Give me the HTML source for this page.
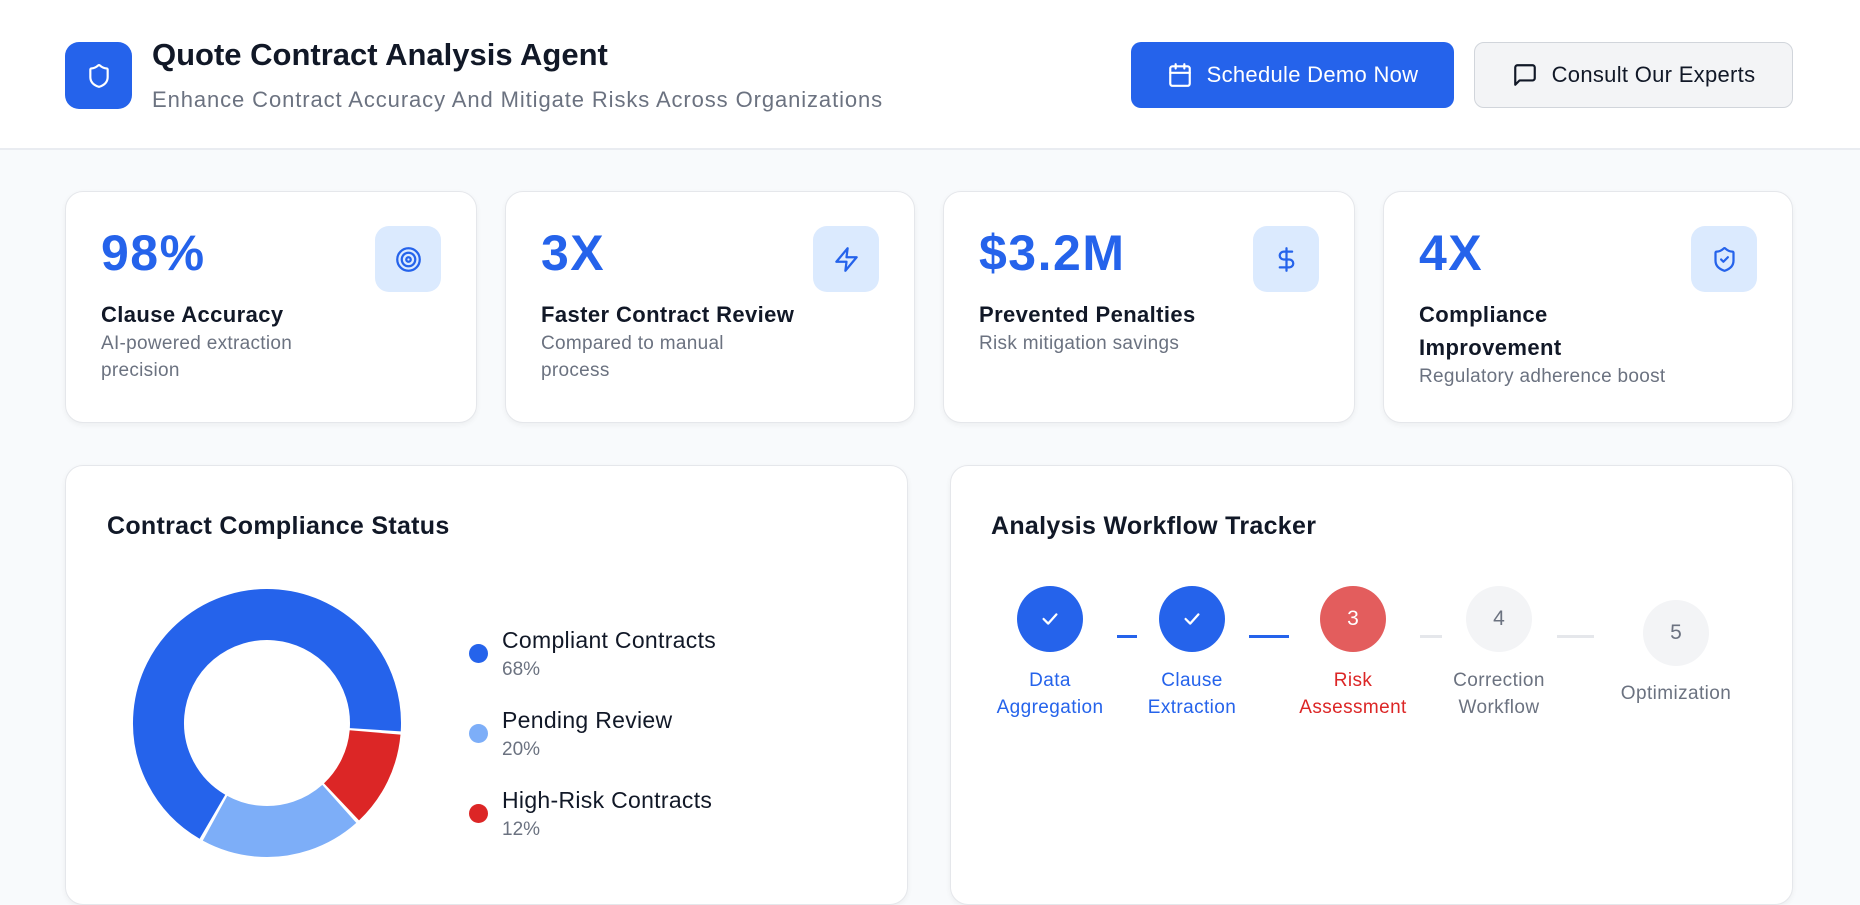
<!DOCTYPE html>
<html><head><meta charset="utf-8"><style>
*{margin:0;padding:0;box-sizing:border-box}
body{width:1860px;height:876px;overflow:hidden;background:#f8fafc;font-family:"Liberation Sans",sans-serif;position:relative;color:#111827}
.abs{position:absolute}
.hdr{left:0;top:0;width:1860px;height:150px;background:#fff;border-bottom:2px solid #e9ecf1}
.logo{left:65px;top:42px;width:67px;height:67px;border-radius:14px;background:#2563eb;display:flex;align-items:center;justify-content:center}
.btn{top:42px;height:66px;border-radius:10px;display:flex;align-items:center;justify-content:center;font-size:22px;gap:14px;letter-spacing:0.3px}
.card{background:#fff;border:1px solid #e5e7eb;border-radius:18px;box-shadow:0 2px 6px rgba(0,0,0,.05)}
.val{font-size:50px;font-weight:bold;color:#2563eb;left:35px;top:32px;letter-spacing:1.5px}
.ib{width:66px;height:66px;border-radius:14px;background:#dbeafe;top:34px;right:35px;display:flex;align-items:center;justify-content:center}
.t{left:35px;top:106px;font-size:22px;line-height:33px;font-weight:bold;color:#111827;letter-spacing:0.4px}
.d{left:35px;font-size:19px;line-height:27px;color:#6b7280;letter-spacing:0.3px}
.lg{font-size:23px;color:#111827;letter-spacing:0.3px}
.lp{font-size:19px;color:#6b7280}
.dot{width:19px;height:19px;border-radius:50%}
.c{width:66px;height:66px;border-radius:50%;display:flex;align-items:center;justify-content:center;font-size:21px}
.lb{font-size:19px;line-height:27px;text-align:center;width:170px;letter-spacing:0.4px}
</style></head><body>
<div class="abs hdr"></div>
<div class="abs logo"><svg width="26" height="26" viewBox="0 0 24 24" fill="none" stroke="#fff" stroke-width="2" stroke-linecap="round" stroke-linejoin="round"><path d="M20 13c0 5-3.5 7.5-7.66 8.95a1 1 0 0 1-.67-.01C7.5 20.5 4 18 4 13V6a1 1 0 0 1 1-1c2 0 4.5-1.2 6.24-2.72a1.17 1.17 0 0 1 1.52 0C14.51 3.81 17 5 19 5a1 1 0 0 1 1 1z"/></svg></div>
<div class="abs" style="left:152px;top:37px;font-size:31px;font-weight:bold;letter-spacing:0px">Quote Contract Analysis Agent</div>
<div class="abs" style="left:152px;top:87px;font-size:22px;color:#6b7280;letter-spacing:0.9px">Enhance Contract Accuracy And Mitigate Risks Across Organizations</div>
<div class="abs btn" style="left:1131px;width:323px;background:#2563eb;color:#fff"><svg width="26" height="26" viewBox="0 0 24 24" fill="none" stroke="#fff" stroke-width="2" stroke-linecap="round" stroke-linejoin="round"><rect x="3" y="4" width="18" height="18" rx="2"/><path d="M16 2v4M8 2v4M3 10h18"/></svg>Schedule Demo Now</div>
<div class="abs btn" style="left:1474px;width:319px;background:#f3f4f6;border:1px solid #d1d5db;color:#111827"><svg width="26" height="26" viewBox="0 0 24 24" fill="none" stroke="#111827" stroke-width="2" stroke-linecap="round" stroke-linejoin="round"><path d="M21 15a2 2 0 0 1-2 2H7l-4 4V5a2 2 0 0 1 2-2h14a2 2 0 0 1 2 2z"/></svg>Consult Our Experts</div>

<div class="abs card" style="left:65px;top:191px;width:412px;height:232px">
<div class="abs val">98%</div>
<div class="abs ib"><svg width="27" height="27" viewBox="0 0 24 24" fill="none" stroke="#2563eb" stroke-width="2"><circle cx="12" cy="12" r="10"/><circle cx="12" cy="12" r="6"/><circle cx="12" cy="12" r="2"/></svg></div>
<div class="abs t">Clause Accuracy</div>
<div class="abs d" style="top:138px">AI-powered extraction<br>precision</div></div>

<div class="abs card" style="left:505px;top:191px;width:410px;height:232px">
<div class="abs val">3X</div>
<div class="abs ib"><svg width="27" height="27" viewBox="0 0 24 24" fill="none" stroke="#2563eb" stroke-width="2" stroke-linejoin="round"><path d="M13 2 3 14h9l-1 8 10-12h-9l1-8z"/></svg></div>
<div class="abs t">Faster Contract Review</div>
<div class="abs d" style="top:138px">Compared to manual<br>process</div></div>

<div class="abs card" style="left:943px;top:191px;width:412px;height:232px">
<div class="abs val">$3.2M</div>
<div class="abs ib"><svg width="27" height="27" viewBox="0 0 24 24" fill="none" stroke="#2563eb" stroke-width="2" stroke-linecap="round"><path d="M12 2v20M17 5H9.5a3.5 3.5 0 0 0 0 7h5a3.5 3.5 0 0 1 0 7H6"/></svg></div>
<div class="abs t">Prevented Penalties</div>
<div class="abs d" style="top:138px">Risk mitigation savings</div></div>

<div class="abs card" style="left:1383px;top:191px;width:410px;height:232px">
<div class="abs val">4X</div>
<div class="abs ib"><svg width="27" height="27" viewBox="0 0 24 24" fill="none" stroke="#2563eb" stroke-width="2" stroke-linecap="round" stroke-linejoin="round"><path d="M20 13c0 5-3.5 7.5-7.66 8.95a1 1 0 0 1-.67-.01C7.5 20.5 4 18 4 13V6a1 1 0 0 1 1-1c2 0 4.5-1.2 6.24-2.72a1.17 1.17 0 0 1 1.52 0C14.51 3.81 17 5 19 5a1 1 0 0 1 1 1z"/><path d="m9 12 2 2 4-4"/></svg></div>
<div class="abs t">Compliance<br>Improvement</div>
<div class="abs d" style="top:171px">Regulatory adherence boost</div></div>

<div class="abs card" style="left:65px;top:465px;width:843px;height:440px"></div>
<div class="abs" style="left:107px;top:512px;font-size:25px;font-weight:bold;letter-spacing:0.3px">Contract Compliance Status</div>
<svg class="abs" style="left:0;top:0" width="600" height="876">
<g transform="rotate(5 267 723)" fill="none" stroke-width="51">
<circle cx="267" cy="723" r="108.5" stroke="#dc2626" stroke-dasharray="78.8 602.9"/>
<circle cx="267" cy="723" r="108.5" stroke="#7daef8" stroke-dasharray="0 81.8 133.3 466.6"/>
<circle cx="267" cy="723" r="108.5" stroke="#2563eb" stroke-dasharray="0 218.1 460.6 3"/>
</g></svg>
<div class="abs dot" style="left:469px;top:644px;background:#2563eb"></div>
<div class="abs lg" style="left:502px;top:627px">Compliant Contracts</div>
<div class="abs lp" style="left:502px;top:659px">68%</div>
<div class="abs dot" style="left:469px;top:724px;background:#7daef8"></div>
<div class="abs lg" style="left:502px;top:707px">Pending Review</div>
<div class="abs lp" style="left:502px;top:739px">20%</div>
<div class="abs dot" style="left:469px;top:804px;background:#dc2626"></div>
<div class="abs lg" style="left:502px;top:787px">High-Risk Contracts</div>
<div class="abs lp" style="left:502px;top:819px">12%</div>

<div class="abs card" style="left:950px;top:465px;width:843px;height:440px"></div>
<div class="abs" style="left:991px;top:512px;font-size:25px;font-weight:bold;letter-spacing:0.3px">Analysis Workflow Tracker</div>
<div class="abs" style="left:1117px;top:635px;width:20px;height:3px;background:#2563eb"></div>
<div class="abs" style="left:1249px;top:635px;width:40px;height:3px;background:#2563eb"></div>
<div class="abs" style="left:1420px;top:635px;width:22px;height:3px;background:#e5e7eb"></div>
<div class="abs" style="left:1557px;top:635px;width:37px;height:3px;background:#e5e7eb"></div>
<div class="abs c" style="left:1017px;top:586px;background:#2563eb"><svg width="22" height="22" viewBox="0 0 24 24" fill="none" stroke="#fff" stroke-width="2.5" stroke-linecap="round" stroke-linejoin="round"><path d="M5 12l5 5 9-10"/></svg></div>
<div class="abs c" style="left:1159px;top:586px;background:#2563eb"><svg width="22" height="22" viewBox="0 0 24 24" fill="none" stroke="#fff" stroke-width="2.5" stroke-linecap="round" stroke-linejoin="round"><path d="M5 12l5 5 9-10"/></svg></div>
<div class="abs c" style="left:1320px;top:586px;background:#e35d5d;color:#fff">3</div>
<div class="abs c" style="left:1466px;top:586px;background:#f3f4f6;color:#6b7280">4</div>
<div class="abs c" style="left:1643px;top:600px;background:#f3f4f6;color:#6b7280">5</div>
<div class="abs lb" style="left:965px;top:667px;color:#2563eb">Data<br>Aggregation</div>
<div class="abs lb" style="left:1107px;top:667px;color:#2563eb">Clause<br>Extraction</div>
<div class="abs lb" style="left:1268px;top:667px;color:#dc2626">Risk<br>Assessment</div>
<div class="abs lb" style="left:1414px;top:667px;color:#6b7280">Correction<br>Workflow</div>
<div class="abs lb" style="left:1591px;top:680px;color:#6b7280">Optimization</div>
</body></html>
